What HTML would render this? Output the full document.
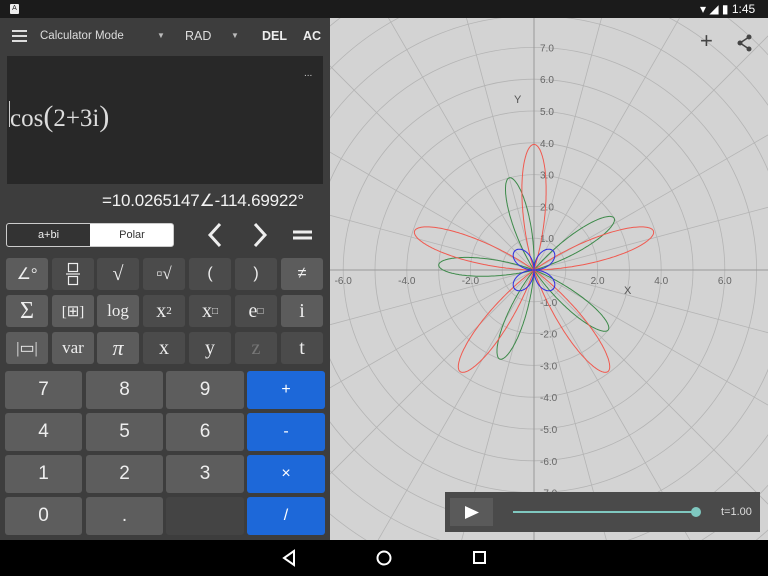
<!DOCTYPE html>
<html><head><meta charset="utf-8">
<style>
*{margin:0;padding:0;box-sizing:border-box}
html,body{width:768px;height:576px;overflow:hidden}
body{background:#3d3d3d;font-family:"Liberation Sans",sans-serif;position:relative}
.a{position:absolute}
.k{position:absolute;border-radius:3px;color:#eee;display:flex;align-items:center;justify-content:center}
.fk{width:42px;height:32px;font-family:"Liberation Serif",serif;font-size:20px}
.l{background:#5c5c5c}.d{background:#4b4b4b}
.nk{height:38px;background:#5d5d5d;font-size:19px}
.b{background:#1d68d9;color:#fff}
</style></head><body>
<div class="a" style="left:0;top:0;width:768px;height:18px;background:#1b1b1b"></div>
<div class="a" style="left:10px;top:4px;width:9px;height:10px;background:#eee;border-radius:1px;font-size:7px;color:#222;text-align:center;line-height:10px">A</div>
<div class="a" style="left:700px;top:2px;color:#fff;font-size:12px;white-space:nowrap">▾ ◢ ▮ 1:45</div>
<div class="a" style="left:12px;top:30px;width:15px;height:2px;background:#ddd;box-shadow:0 5px #ddd,0 10px #ddd"></div>
<div class="a" style="left:40px;top:30px;color:#ddd;font-size:11.5px">Calculator Mode</div>
<div class="a" style="left:157px;top:31px;color:#bbb;font-size:8px">▼</div>
<div class="a" style="left:185px;top:29px;color:#ddd;font-size:12.5px">RAD</div>
<div class="a" style="left:231px;top:31px;color:#bbb;font-size:8px">▼</div>
<div class="a" style="left:262px;top:29px;color:#eee;font-size:12.5px;font-weight:bold">DEL</div>
<div class="a" style="left:303px;top:29px;color:#eee;font-size:12.5px;font-weight:bold">AC</div>
<div class="a" style="left:7px;top:56px;width:316px;height:128px;background:#282828"></div>
<div class="a" style="left:304px;top:68px;color:#ccc;font-size:10px">...</div>
<div class="a" style="left:9px;top:101px;width:1px;height:26px;background:#ccc"></div>
<div class="a" style="left:10px;top:100px;color:#ddd;font-family:'Liberation Serif',serif;font-size:25px;white-space:nowrap">cos<span style="font-size:30px;font-weight:100">(</span>2+3i<span style="font-size:30px">)</span></div>
<div class="a" style="left:102px;top:191px;color:#f2f2f2;font-size:17px;letter-spacing:-0.2px;white-space:nowrap">=10.0265147∠-114.69922°</div>
<div class="a" style="left:6px;top:223px;width:168px;height:24px;border:1px solid #ccc;border-radius:3px;background:#fff;overflow:hidden">
<div class="a" style="left:0;top:0;width:83px;height:22px;background:#333;color:#eee;font-size:11px;text-align:center;line-height:22px">a+bi</div>
<div class="a" style="left:83px;top:0;width:84px;height:22px;color:#333;font-size:11px;text-align:center;line-height:22px">Polar</div></div>
<svg class="a" style="left:200px;top:220px" width="120" height="30"><g stroke="#eee" stroke-width="3" fill="none"><path d="M20 4 L10 15 L20 26"/><path d="M55 4 L65 15 L55 26"/><path d="M93 12 H112 M93 18 H112"/></g></svg>
<div class="k fk l" style="left:6px;top:258px;font-size:16px">∠°</div>
<div class="k fk d" style="left:52px;top:258px"><svg width="14" height="24"><g stroke="#eee" fill="none" stroke-width="1.2"><rect x="2.5" y="1.5" width="9" height="8"/><rect x="2.5" y="14.5" width="9" height="8"/><path d="M0 12 H14"/></g></svg></div>
<div class="k fk d" style="left:97px;top:258px">√</div>
<div class="k fk d" style="left:143px;top:258px;font-size:17px">▫√</div>
<div class="k fk d" style="left:189px;top:258px;font-family:'Liberation Sans';font-size:16px">(</div>
<div class="k fk d" style="left:235px;top:258px;font-family:'Liberation Sans';font-size:16px">)</div>
<div class="k fk l" style="left:281px;top:258px;font-family:'Liberation Sans';font-size:16px">≠</div>
<div class="k fk l" style="left:6px;top:295px;font-size:24px">Σ</div>
<div class="k fk l" style="left:52px;top:295px;font-size:15px">[⊞]</div>
<div class="k fk l" style="left:97px;top:295px;font-size:17px">log</div>
<div class="k fk d" style="left:143px;top:295px">x<sup style="font-size:11px">2</sup></div>
<div class="k fk d" style="left:189px;top:295px">x<sup style="font-size:10px">□</sup></div>
<div class="k fk d" style="left:235px;top:295px">e<sup style="font-size:10px">□</sup></div>
<div class="k fk l" style="left:281px;top:295px">i</div>
<div class="k fk l" style="left:6px;top:332px;font-size:16px">|▭|</div>
<div class="k fk l" style="left:52px;top:332px;font-size:17px">var</div>
<div class="k fk l" style="left:97px;top:332px;font-style:italic;font-size:22px">π</div>
<div class="k fk d" style="left:143px;top:332px">x</div>
<div class="k fk d" style="left:189px;top:332px">y</div>
<div class="k fk d" style="left:235px;top:332px;color:#777">z</div>
<div class="k fk d" style="left:281px;top:332px">t</div>
<div class="k nk" style="left:5px;top:371px;width:77px">7</div>
<div class="k nk" style="left:86px;top:371px;width:77px">8</div>
<div class="k nk" style="left:166px;top:371px;width:78px">9</div>
<div class="k nk b" style="left:247px;top:371px;width:78px;font-size:16px">+</div>
<div class="k nk" style="left:5px;top:413px;width:77px">4</div>
<div class="k nk" style="left:86px;top:413px;width:77px">5</div>
<div class="k nk" style="left:166px;top:413px;width:78px">6</div>
<div class="k nk b" style="left:247px;top:413px;width:78px;font-size:16px">-</div>
<div class="k nk" style="left:5px;top:455px;width:77px">1</div>
<div class="k nk" style="left:86px;top:455px;width:77px">2</div>
<div class="k nk" style="left:166px;top:455px;width:78px">3</div>
<div class="k nk b" style="left:247px;top:455px;width:78px;font-size:16px">×</div>
<div class="k nk" style="left:5px;top:497px;width:77px">0</div>
<div class="k nk" style="left:86px;top:497px;width:77px">.</div>
<div class="k nk" style="left:166px;top:497px;width:78px;background:#444"></div>
<div class="k nk b" style="left:247px;top:497px;width:78px;font-size:16px">/</div>
<svg id="g" class="a" style="left:330px;top:18px;background:#d3d3d3" width="438" height="522"></svg>
<div class="a" style="left:700px;top:30px;color:#444;font-size:22px;line-height:22px">+</div>
<svg class="a" style="left:736px;top:34px" width="18" height="18"><g fill="#444"><circle cx="13" cy="3" r="2.5"/><circle cx="4" cy="9" r="2.5"/><circle cx="13" cy="15" r="2.5"/></g><path d="M13 3 L4 9 L13 15" stroke="#444" stroke-width="1.5" fill="none"/></svg>
<div class="a" style="left:445px;top:492px;width:315px;height:40px;background:#4a4a4a"></div>
<div class="a" style="left:450px;top:498px;width:43px;height:28px;background:#5a5a5a"></div>
<svg class="a" style="left:464px;top:505px" width="16" height="15"><path d="M1 1 L15 7.5 L1 14Z" fill="#fff"/></svg>
<div class="a" style="left:513px;top:511px;width:183px;height:2px;background:#7fc8c0"></div>
<div class="a" style="left:691px;top:507px;width:10px;height:10px;border-radius:50%;background:#7fc8c0"></div>
<div class="a" style="left:721px;top:506px;color:#ddd;font-size:11px">t=1.00</div>
<div class="a" style="left:0;top:540px;width:768px;height:36px;background:#000"></div>
<svg class="a" style="left:280px;top:548px" width="210" height="20"><g stroke="#fff" stroke-width="2" fill="none"><path d="M14 3 L4 10 L14 17Z"/><circle cx="104" cy="10" r="6.5"/><rect x="194" y="4" width="11" height="11"/></g></svg>
<script>
var g=document.getElementById('g'),ox=204,oy=252,s=31.8,h='';
for(var r=1;r<=20;r++)h+='<circle cx="'+ox+'" cy="'+oy+'" r="'+r*s+'" fill="none" stroke="#b4b4b4" stroke-width="0.8"/>';
for(var a=0;a<180;a+=15){var c=Math.cos(a*Math.PI/180),n=Math.sin(a*Math.PI/180);h+='<line x1="'+(ox-c*900)+'" y1="'+(oy+n*900)+'" x2="'+(ox+c*900)+'" y2="'+(oy-n*900)+'" stroke="#b4b4b4" stroke-width="0.8"/>';}
h+='<line x1="0" y1="'+oy+'" x2="438" y2="'+oy+'" stroke="#999"/><line x1="'+ox+'" y1="0" x2="'+ox+'" y2="522" stroke="#999"/>';
for(var i=-6;i<=6;i+=2){if(i)h+='<text x="'+(ox+i*s)+'" y="'+(oy+14)+'" font-size="10" fill="#666" text-anchor="middle" font-family="Liberation Sans">'+i.toFixed(1)+'</text>';}
for(var j=-7;j<=7;j++){if(j)h+='<text x="'+(ox+6)+'" y="'+(oy-j*s+4)+'" font-size="10" fill="#666" font-family="Liberation Sans">'+j.toFixed(1)+'</text>';}
h+='<text x="'+(ox+90)+'" y="'+(oy+24)+'" font-size="11" fill="#555" font-family="Liberation Sans">X</text><text x="'+(ox-20)+'" y="'+(oy-167)+'" font-size="11" fill="#555" font-family="Liberation Sans">Y</text>';
function rose(A,k,ph,p,col,sgn){var d='';for(var t=0;t<=2*Math.PI+0.01;t+=0.004){var v=Math.cos(k*(t-ph));var r=A*Math.pow(Math.abs(v),p);if(sgn&&v<0)r=0;var x=ox+r*Math.cos(t)*s,y=oy-r*Math.sin(t)*s;d+=(d?'L':'M')+x.toFixed(1)+' '+y.toFixed(1);}return '<path d="'+d+'" fill="none" stroke="'+col+'" stroke-width="1"/>';}
h+=rose(3,5,105*Math.PI/180,1.4,'#3d8a4a',1);
h+=rose(3.95,5,Math.PI/2,1.4,'#f05a50',1);
h+=rose(0.85,2,Math.PI/4,1,'#3030e0',0);
g.innerHTML=h;
</script>
</body></html>
